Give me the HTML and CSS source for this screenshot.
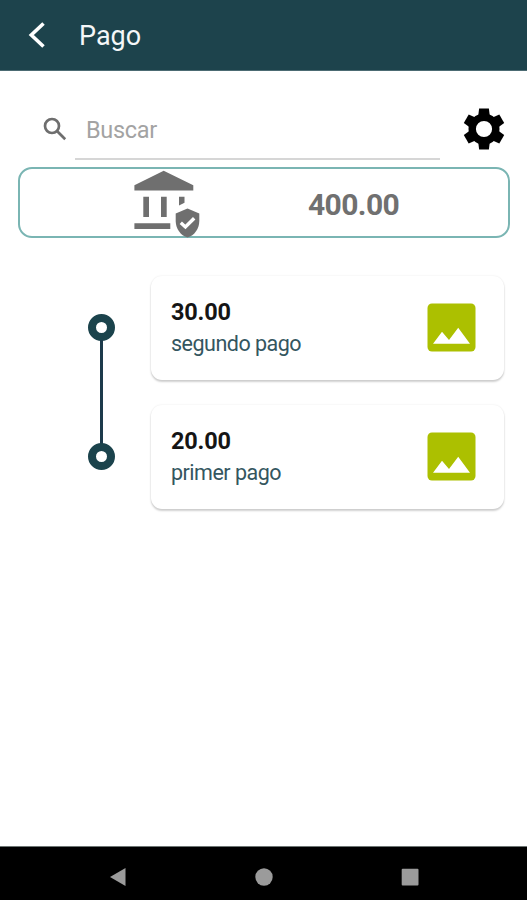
FILE: index.html
```html
<!DOCTYPE html>
<html lang="es">
    <head>
        <meta charset="UTF-8">
        <title>Pago</title>
        <link rel="stylesheet" href="styles.css">
    </head>
    <body>
        <div id="app">
            <header class="topbar">
                <svg class="back" width="18" height="28" viewBox="0 0 18 28">
                    <path d="M15.5 2.5L3.3 14L15.5 25.5"/>
                </svg>
                <h1>Pago</h1>
            </header>
            <main>
                <div class="search">
                    <svg class="lupa" width="24" height="24" viewBox="0 0 24 24">
                        <circle cx="9" cy="9" r="7"/>
                        <path d="M14 14L22.2 22.2"/>
                    </svg>
                    <div class="field">Buscar</div>
                    <svg class="gear" width="42" height="42" viewBox="-21 -21 42 42">
                        <path id="tooth" d="M-4.9 -20.5H4.9L5.9 -12H-5.9Z"/>
                        <use href="#tooth" transform="rotate(60)"/>
                        <use href="#tooth" transform="rotate(120)"/>
                        <use href="#tooth" transform="rotate(180)"/>
                        <use href="#tooth" transform="rotate(240)"/>
                        <use href="#tooth" transform="rotate(300)"/>
                        <circle r="11.8"/>
                    </svg>
                </div>
                <section class="total">
                    <svg class="bank" width="66" height="68" viewBox="0 0 66 68">
                        <path d="M29.7 .7L59.3 15.3V20.5H.4V15.3ZM9.3 26.7H15V47H9.3ZM27 26.7H32.7V47H27ZM45 26.7H50.5V32.8L45 35.5ZM.4 53.3H36.3V59H.4Z"/>
                        <path d="M53.5 38.6L65.3 43.5V51C65.3 58.5 60.5 65.5 53.5 67.6C46.5 65.5 41.7 58.5 41.7 51V43.5Z"/>
                        <path class="check" d="M46.8 52.8L51.4 57L60.2 48.2"/>
                    </svg>
                    <strong>400.00</strong>
                </section>
                <ul class="timeline">
                    <li>
                        <span class="dot"></span>
                        <div class="card">
                            <div class="info">
                                <b>30.00</b>
                                <p>segundo pago</p>
                            </div>
                            <svg class="photo" width="49" height="49" viewBox="0 0 49 49">
                                <rect x=".5" y=".5" width="48" height="48" rx="4.5"/>
                                <path d="M6 40.7L15 28.7L22 37L31.2 24.7L43 40.7Z"/>
                            </svg>
                        </div>
                    </li>
                    <li>
                        <span class="dot"></span>
                        <div class="card">
                            <div class="info">
                                <b>20.00</b>
                                <p>primer pago</p>
                            </div>
                            <svg class="photo" width="49" height="49" viewBox="0 0 49 49">
                                <rect x=".5" y=".5" width="48" height="48" rx="4.5"/>
                                <path d="M6 40.7L15 28.7L22 37L31.2 24.7L43 40.7Z"/>
                            </svg>
                        </div>
                    </li>
                </ul>
            </main>
            <nav class="navbar">
                <svg width="18" height="18" viewBox="0 0 18 18"><path d="M1 9L16.5 0V18Z"/></svg>
                <svg width="18" height="18" viewBox="0 0 18 18"><circle cx="9" cy="9" r="8.7"/></svg>
                <svg width="18" height="18" viewBox="0 0 18 18"><rect x=".7" y=".8" width="16.8" height="16.6" rx="1"/></svg>
            </nav>
        </div>
    </body>
</html>
```

FILE: styles.css
```css
*{
    margin:0;
    padding:0;
    box-sizing:border-box;
}
ul{
    list-style:none;
}
svg{
    display:block;
    flex:none;
}
body{
    font-family:Roboto, "Liberation Sans", sans-serif;
    background-color:#fff;
}
#app{
    height:900px;
    display:flex;
    flex-direction:column;
}
.topbar{
    height:71px;
    padding-left:28px;
    display:flex;
    align-items:center;
    background-color:#1d434c;
    border-bottom:1px solid #4c6b73;
}
.topbar h1{
    margin:2px 0 0 33px;
    font-size:27px;
    font-weight:400;
    line-height:32px;
    color:#f4f7f8;
}
.back path{
    fill:none;
    stroke:#fff;
    stroke-width:3.6;
}
main{
    flex:1;
    padding-top:28px;
}
.search{
    height:61px;
    padding:0 22px 0 43px;
    display:flex;
    align-items:center;
}
.lupa{
    margin:0 8px 2px 0;
    fill:none;
    stroke:#6e6e6e;
    stroke-width:2.7;
}
.field{
    width:365px;
    height:61px;
    padding-left:11px;
    font-size:23.5px;
    letter-spacing:-.3px;
    line-height:62px;
    color:#a3a3a3;
    border-bottom:2px solid #d6d6d6;
}
.gear{
    margin:0 0 2px 23px;
}
.gear circle{
    fill:#fff;
    stroke:#000;
    stroke-width:7.4;
}
.total{
    height:71px;
    margin:7px 17px 0 18px;
    padding-left:114px;
    display:flex;
    align-items:center;
    border:2px solid #7ab5b3;
    border-radius:14px;
}
.bank{
    margin-top:2px;
    fill:#6f6f6f;
}
.bank .check{
    fill:none;
    stroke:#fff;
    stroke-width:3.4;
}
.total strong{
    margin:3px 0 0 108px;
    font-size:30px;
    font-weight:700;
    letter-spacing:-.6px;
    color:#707070;
}
.timeline{
    margin-top:38px;
    padding:0 23px 0 88px;
}
.timeline li{
    height:104px;
    margin-bottom:25px;
    display:flex;
    align-items:center;
    position:relative;
}
.dot{
    width:27px;
    height:27px;
    margin:0 36px 1px 0;
    border:8px solid #1b434c;
    border-radius:50%;
}
/* line down to the next dot */
.timeline li:first-child::after{
    content:"";
    position:absolute;
    left:12px;
    top:64px;
    width:3px;
    height:104px;
    background-color:#1c3a4b;
}
.card{
    flex:1;
    height:104px;
    padding:0 28px 0 20px;
    display:flex;
    align-items:center;
    justify-content:space-between;
    border-radius:11px;
    box-shadow:0 2px 2px rgba(0,0,0,.18), 0 0 2px rgba(0,0,0,.1);
}
.info b{
    display:block;
    font-size:23.5px;
    letter-spacing:-.2px;
    line-height:32px;
    color:#151515;
}
.info p{
    font-size:21.5px;
    letter-spacing:-.5px;
    line-height:32px;
    color:#34565f;
}
.photo{
    margin-bottom:1px;
}
.photo rect{
    fill:#acc000;
}
.photo path{
    fill:#fff;
}
.navbar{
    height:54px;
    padding:7px 108px 0 109px;
    display:flex;
    align-items:center;
    justify-content:space-between;
    background-color:#000;
    border-top:1px solid #6d7573;
    fill:#9b9b9b;
}
```
